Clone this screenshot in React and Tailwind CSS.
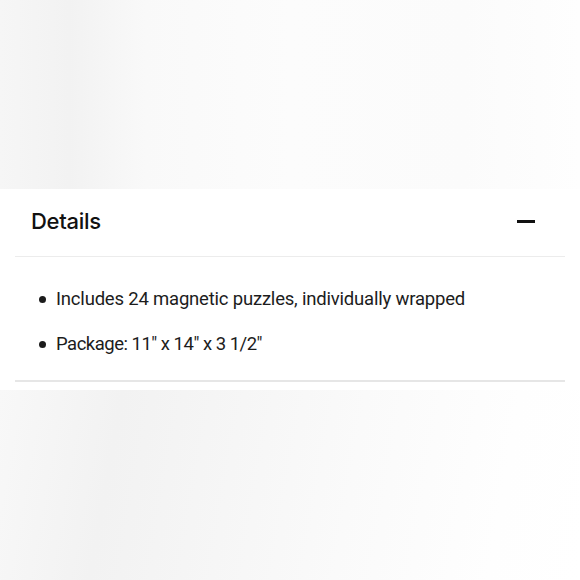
export default function App() {
  return (
    <div className="w-[580px] h-[580px] flex flex-col bg-white overflow-hidden" style={{ fontFamily: "Inter, 'Noto Sans', sans-serif" }}>
      <div className="h-[189px] shrink-0 bg-[linear-gradient(90deg,#f6f6f6_0%,#f2f2f2_12%,#f9f9f9_25%,#fcfcfc_50%,#fbfbfb_80%,#fefefe_100%)]" />
      <div className="h-[201px] shrink-0 bg-white flex flex-col">
        <div className="h-[67px] flex items-center justify-between pl-[31px] pr-[45px] pb-[3px]">
          <span className="text-[22px] font-medium text-[#111] tracking-[-0.3px]">Details</span>
          <div className="w-[18px] h-[3px] bg-[#111]" />
        </div>
        <div className="mx-[15px] h-px bg-[#ececec]" />
        <ul className="flex flex-col gap-[23px] pt-[31px] pl-[39px] text-[18.5px] text-[#1c1c1c] tracking-[-0.2px]" style={{ fontFamily: "Roboto, sans-serif" }}>
          <li className="flex items-center gap-[10px] leading-[22px]">
            <span className="w-[7px] h-[7px] rounded-full bg-[#1c1c1c]" />
            <span>Includes 24 magnetic puzzles, individually wrapped</span>
          </li>
          <li className="flex items-center gap-[10px] leading-[22px]">
            <span className="w-[7px] h-[7px] rounded-full bg-[#1c1c1c]" />
            <span className="tracking-[-0.5px]">Package: 11" x 14" x 3 1/2"</span>
          </li>
        </ul>
        <div className="mt-auto mb-[8px] mx-[15px] h-[2px] bg-[#e6e6e6]" />
      </div>
      <div className="flex-1 bg-[linear-gradient(100deg,#f8f8f8_0%,#f2f2f2_20%,#f6f6f6_40%,#fafafa_60%,#fefefe_85%,#ffffff_100%)]" />
    </div>
  );
}
